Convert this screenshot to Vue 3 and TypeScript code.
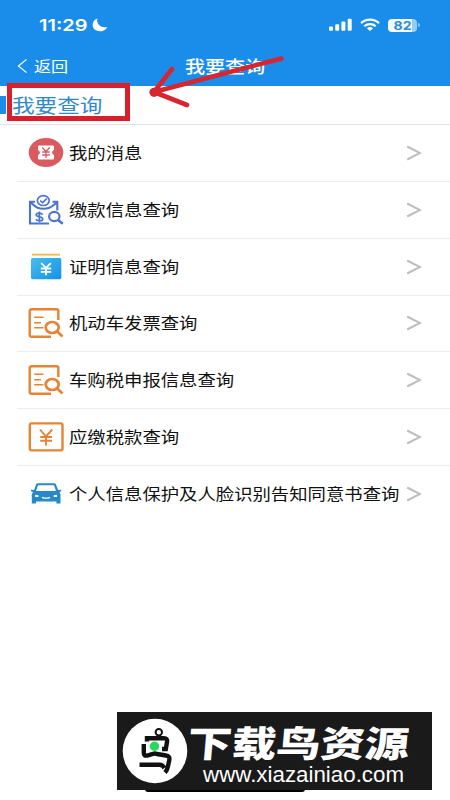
<script setup lang="ts">
type IconName = 'ticket' | 'payment' | 'card' | 'search' | 'yen' | 'car'

interface MenuItem {
  icon: IconName
  label: string
}

const items: MenuItem[] = [
  { icon: 'ticket', label: '我的消息' },
  { icon: 'payment', label: '缴款信息查询' },
  { icon: 'card', label: '证明信息查询' },
  { icon: 'search', label: '机动车发票查询' },
  { icon: 'search', label: '车购税申报信息查询' },
  { icon: 'yen', label: '应缴税款查询' },
  { icon: 'car', label: '个人信息保护及人脸识别告知同意书查询' },
]
</script>

<template>
  <div class="screen">
    <header class="header">
      <div class="status">
        <span class="time">11:29</span>
        <svg class="moon" width="16" height="14" viewBox="0 0 16 14">
          <path d="M5.3 0.6C4.2 5.8 8.6 10.7 15.3 8.9C13.6 12 11 13.3 8 13.3C3.8 13.3 0.6 10.7 0.6 7.1C0.6 4.2 2.4 1.6 5.3 0.6Z" fill="#fff" />
        </svg>
        <svg class="signal" width="24" height="14" viewBox="0 0 24 14">
          <g fill="#fff">
            <rect x="0" y="8.5" width="4" height="4.2" rx="1" />
            <rect x="6.2" y="6.2" width="4" height="6.5" rx="1" />
            <rect x="12.4" y="3.4" width="4" height="9.3" rx="1" />
            <rect x="18.7" y="0.8" width="4" height="11.9" rx="1" />
          </g>
        </svg>
        <svg class="wifi" width="20" height="14" viewBox="0 0 20 14">
          <g fill="none" stroke="#fff" stroke-width="2.2">
            <path d="M1 5.1C6 0.4 14 0.4 19 5.1" />
            <path d="M4.3 8.2C7.5 5.3 12.5 5.3 15.7 8.2" />
          </g>
          <path d="M6.9 10.3C8.7 8.7 11.3 8.7 13.1 10.3L10 13Z" fill="#fff" />
        </svg>
        <span class="battery"><span class="percent">82</span></span>
        <span class="battery-tip"></span>
      </div>
      <nav class="nav">
        <svg class="back-icon" width="12" height="16" viewBox="0 0 12 16">
          <path d="M9.6 1.4L1.4 8L9.6 14.6" fill="none" stroke="#fff" stroke-width="1.2" />
        </svg>
        <span class="back">返回</span>
        <span class="title">我要查询</span>
      </nav>
    </header>

    <section class="heading">
      <i class="marker"></i>
      <h1>我要查询</h1>
    </section>

    <ul class="list">
      <li v-for="item in items" :key="item.label" class="row">
        <svg class="icon" width="36" height="32" viewBox="0 0 36 32">
          <template v-if="item.icon === 'ticket'">
            <ellipse cx="18" cy="15.5" rx="17.3" ry="14.5" fill="#d95b60" />
            <path d="M10.5 9H25.5V13A2.6 2.6 0 0 0 25.5 18V22H10.5V18A2.6 2.6 0 0 0 10.5 13Z" fill="#fff" stroke="#fff" stroke-linejoin="round" />
            <path d="M14.2 10.5L18 14.5L21.8 10.5M18 14.500V21M14.200 15H21.800M14.200 18H21.800" fill="none" stroke="#d95b60" stroke-width="1.3" />
          </template>
          <g v-else-if="item.icon === 'payment'" fill="none" stroke="#4b75ca" stroke-width="2.1">
            <path d="M7 7.800H2V29.500H21M24.500 7.800H29.300V16.500M2.500 8.500C5 9.500 6.500 14.800 15.500 14.800C24 14.800 26.500 9.500 29 8.500" />
            <ellipse cx="15.300" cy="6.600" rx="5.900" ry="4.900" fill="#fff" stroke-width="1.700" />
            <path d="M12.200 6.600L14.600 8.600L18.800 4.600" stroke-width="1.600" />
            <path d="M14.700 20.600C12.700 18.300 8 18.700 8.200 20.900C8.400 23.500 14.800 22.200 14.800 25C14.800 27.300 10 27.300 7.800 25.300M11.400 17.500V28.300" stroke-width="1.700" />
            <ellipse cx="26.300" cy="22.500" rx="5.200" ry="4.600" />
            <path d="M30 26L34.800 29.700" stroke-width="2.500" />
          </g>
          <template v-else-if="item.icon === 'card'">
            <defs>
              <linearGradient id="card-fill" x1="0" y1="0" x2="1" y2="1">
                <stop offset="0" stop-color="#48bdec" />
                <stop offset="1" stop-color="#1491e6" />
              </linearGradient>
            </defs>
            <rect x="4" y="2.7" width="28" height="1.9" fill="#f0bd55" />
            <rect x="3" y="7" width="30.3" height="21.2" rx="1.6" fill="url(#card-fill)" />
            <path d="M13.2 12.200L18 16.900L22.800 12.200M18 16.900V24.200M12.800 17.500H23.200M12.800 20.800H23.200" fill="none" stroke="#fff" stroke-width="1.8" />
          </template>
          <g v-else-if="item.icon === 'search'" fill="none" stroke="#e48434">
            <path d="M30.3 13V4Q30.3 2.3 28.5 2.3H3.8Q1.7 2.3 1.7 4V28Q1.7 29.8 3.8 29.8H23" stroke-width="2.4" />
            <path d="M6.2 10.3H15.5M6.2 15.7H13M6.2 20.8H15.5" stroke-width="1.5" />
            <ellipse cx="24.2" cy="20.5" rx="6.5" ry="5.5" stroke-width="2.7" />
            <path d="M29.2 24.5L34.5 29.5" stroke-width="2.7" />
          </g>
          <g v-else-if="item.icon === 'yen'" fill="none" stroke="#e48434">
            <rect x="1.8" y="2.4" width="32.7" height="27" rx="1.8" stroke-width="2.4" />
            <path d="M12 8.5L18 15.5L24.2 8.5M18 15.5V24.5M12.2 16H24M12.2 19.8H24" stroke-width="1.9" />
          </g>
          <template v-else>
            <path d="M8.2 6.1Q8.8 5.3 10 5.3H26Q27.2 5.3 27.8 6.1L30.1 12L33.2 11.7V13.2L31.5 14L32.5 16.5V25.5H28.4V23.5H8V25.5H3.8V16.5L5 14L3 13.2V11.7L6.1 12Z" fill="#2789c7" />
            <path d="M10 7.2H26L28 13H8Z" fill="#fff" />
            <path d="M7.2 16.7L10.5 17.2V18.9H7.2ZM29 16.7L25.7 17.2V18.9H29Z" fill="#fff" />
            <path d="M14 19.3Q18 21.1 22 19.3" fill="none" stroke="#fff" stroke-width="1.3" />
          </template>
        </svg>
        <span class="label">{{ item.label }}</span>
        <svg class="chevron" width="16" height="16" viewBox="0 0 16 16">
          <path d="M1.2 1.5L14 8L1.2 14.5" fill="none" stroke="#bebebe" stroke-width="2" />
        </svg>
      </li>
    </ul>

    <div class="highlight"></div>
    <svg class="arrow" width="140" height="60" viewBox="0 0 140 60">
      <path d="M132.5 8.5L5 42M23 19L5 42L38 55" fill="none" stroke="#d7262f" stroke-width="4.6" stroke-linecap="round" stroke-linejoin="round" />
      <circle cx="5" cy="42.3" r="4.6" fill="#d7262f" />
    </svg>

    <div class="home-bar"></div>
    <aside class="banner">
      <svg class="bird" width="66" height="66" viewBox="0 0 66 66">
        <circle cx="33" cy="33" r="32.3" fill="#fff" />
        <g fill="none" stroke="#111" stroke-width="4.4">
          <circle cx="36.8" cy="14.2" r="3.2" stroke-width="2" />
          <path d="M25 23.500V20.300H42Q45.700 20.300 45 24L43.800 31H40" />
          <path d="M21.800 26V35Q21.800 38.200 25 37.500L31 35.800Q33 35.200 35 36L44 37.500Q48 37.800 47.300 42L46 48Q45.300 52 43 54.500" />
          <path d="M17.500 46.800H37.500Q40.500 46.800 42.500 50" />
        </g>
        <circle cx="32.5" cy="28.3" r="4.7" fill="#24d95b" />
      </svg>
      <div class="brand">
        <span class="brand-name">下载鸟资源</span>
        <span class="brand-url">www.xiazainiao.com</span>
      </div>
    </aside>
  </div>
</template>

<style>
body {
  margin: 0;
  background: #fff;
}
</style>

<style scoped>
.screen {
  position: relative;
  width: 450px;
  height: 800px;
  overflow: hidden;
  background: #fff;
  font-family: "Noto Sans", "Noto Sans CJK SC", sans-serif;
  color: #111;
}

.header {
  height: 86px;
  background: #198de9;
  color: #fff;
}

.status {
  display: flex;
  align-items: center;
  height: 50px;
  padding-left: 39px;
}

.time {
  width: 53px;
  font: 600 16px/20px Inter, sans-serif;
  transform: scaleX(1.25);
  transform-origin: left;
  white-space: nowrap;
}

.signal {
  margin-left: 221px;
}

.wifi {
  margin-left: 7px;
}

.battery {
  width: 29px;
  height: 13px;
  margin-left: 8px;
  border-radius: 4px;
  background: linear-gradient(to right, #f2fbff 82%, #96cdf6 82%);
  color: #2d8bd5;
  text-align: center;
  font: 700 12px/13px Inter, sans-serif;
}

.percent {
  display: block;
  transform: scaleX(1.17);
}

.battery-tip {
  width: 1.5px;
  height: 4px;
  margin-left: 1px;
  border-radius: 0 2px 2px 0;
  background: #8ec9f6;
}

.nav {
  display: flex;
  align-items: center;
  height: 32px;
  padding-left: 17px;
}

.back,
.title,
.heading h1,
.label,
.brand-name,
.brand-url {
  transform-origin: left;
  white-space: nowrap;
}

.back {
  width: 151px;
  margin-left: 5px;
  font: 400 15px/20px "Noto Sans CJK SC", sans-serif;
  transform: scaleX(1.14);
}

.title {
  font: 500 17px/20px "Noto Sans CJK SC", sans-serif;
  transform: scaleX(1.18);
}

.heading {
  display: flex;
  align-items: center;
  box-sizing: border-box;
  height: 39px;
  border-bottom: 1px solid #e2e2e2;
}

.marker {
  width: 6px;
  height: 18px;
  background: #198de9;
}

.heading h1 {
  margin: 0 0 0 6px;
  color: #3089cc;
  font: 400 19px/26px "Noto Sans CJK SC", sans-serif;
  transform: scaleX(1.19);
}

.list {
  margin: 0;
  padding: 0;
  list-style: none;
}

.row {
  display: flex;
  align-items: center;
  box-sizing: border-box;
  height: 56.85px;
  margin-left: 17px;
  padding-left: 11px;
  border-bottom: 1px solid #ececec;
}

.row:last-child {
  border-bottom: 0;
}

.icon {
  flex: none;
}

.label {
  flex: none;
  width: 337px;
  margin-left: 5px;
  padding-bottom: 2px;
  font: 400 16px/24px "Noto Sans CJK SC", sans-serif;
  transform: scaleX(1.147);
}

.chevron {
  flex: none;
}

.highlight {
  position: absolute;
  top: 83px;
  left: 7px;
  box-sizing: border-box;
  width: 123px;
  height: 38px;
  border: 5px solid #d7202c;
}

.arrow {
  position: absolute;
  top: 50px;
  left: 149px;
}

.home-bar {
  position: absolute;
  top: 786px;
  left: 145px;
  width: 160px;
  height: 6px;
  border-radius: 3px;
  background: #000;
}

.banner {
  position: absolute;
  top: 712px;
  left: 117px;
  display: flex;
  align-items: center;
  box-sizing: border-box;
  width: 315px;
  height: 78px;
  padding-left: 5px;
  background: #1a1a1a;
  color: #fff;
}

.brand {
  display: flex;
  flex-direction: column;
  height: 66px;
}

.brand-name {
  height: 46px;
  font: 900 36px/46px "Noto Sans CJK SC", sans-serif;
  transform: scaleX(1.23) skewX(-4deg);
}

.brand-url {
  margin-left: 15px;
  font: 400 22px/22px "Liberation Sans", sans-serif;
  transform: scaleX(1.015);
}
</style>
